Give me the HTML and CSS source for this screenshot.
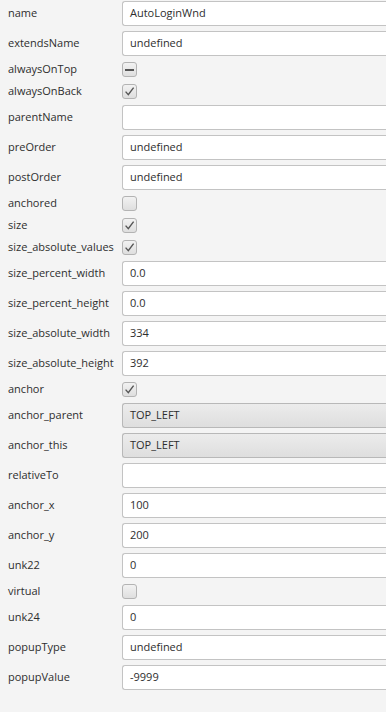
FILE: index.html
```html
<!DOCTYPE html>
<html>
<head>
<meta charset="utf-8">
<link rel="stylesheet" href="styles.css">
</head>
<body>
<div class="grid">
  <div class="label">name</div><div class="field">AutoLoginWnd</div>
  <div class="label">extendsName</div><div class="field">undefined</div>
  <div class="label">alwaysOnTop</div><div class="cbcell"><span class="cb"><span class="dash"></span></span></div>
  <div class="label">alwaysOnBack</div><div class="cbcell"><span class="cb"><svg width="15" height="15" viewBox="0 0 15 15"><path d="M3.6 7.6 L6.3 10.6 L11.6 3.6" fill="none" stroke="#555" stroke-width="1.4"/></svg></span></div>
  <div class="label">parentName</div><div class="field"></div>
  <div class="label">preOrder</div><div class="field">undefined</div>
  <div class="label">postOrder</div><div class="field">undefined</div>
  <div class="label">anchored</div><div class="cbcell"><span class="cb"></span></div>
  <div class="label">size</div><div class="cbcell"><span class="cb"><svg width="15" height="15" viewBox="0 0 15 15"><path d="M3.6 7.6 L6.3 10.6 L11.6 3.6" fill="none" stroke="#555" stroke-width="1.4"/></svg></span></div>
  <div class="label">size_absolute_values</div><div class="cbcell"><span class="cb"><svg width="15" height="15" viewBox="0 0 15 15"><path d="M3.6 7.6 L6.3 10.6 L11.6 3.6" fill="none" stroke="#555" stroke-width="1.4"/></svg></span></div>
  <div class="label">size_percent_width</div><div class="field">0.0</div>
  <div class="label">size_percent_height</div><div class="field">0.0</div>
  <div class="label">size_absolute_width</div><div class="field">334</div>
  <div class="label">size_absolute_height</div><div class="field">392</div>
  <div class="label">anchor</div><div class="cbcell"><span class="cb"><svg width="15" height="15" viewBox="0 0 15 15"><path d="M3.6 7.6 L6.3 10.6 L11.6 3.6" fill="none" stroke="#555" stroke-width="1.4"/></svg></span></div>
  <div class="label">anchor_parent</div><div class="combo">TOP_LEFT</div>
  <div class="label">anchor_this</div><div class="combo">TOP_LEFT</div>
  <div class="label">relativeTo</div><div class="field"></div>
  <div class="label">anchor_x</div><div class="field">100</div>
  <div class="label">anchor_y</div><div class="field">200</div>
  <div class="label">unk22</div><div class="field">0</div>
  <div class="label">virtual</div><div class="cbcell"><span class="cb"></span></div>
  <div class="label">unk24</div><div class="field">0</div>
  <div class="label">popupType</div><div class="field">undefined</div>
  <div class="label">popupValue</div><div class="field">-9999</div>
</div>
</body>
</html>
```
FILE: styles.css
```css
html, body {
  margin: 0;
  padding: 0;
  background: #f4f4f4;
  overflow: hidden;
}
body {
  width: 386px;
  height: 712px;
  font-family: "Open Sans", "Noto Sans", sans-serif;
  font-size: 11px;
  color: #2e2e2e;
}
.grid {
  display: grid;
  grid-template-columns: 114px 1fr;
  row-gap: 5px;
  padding: 1px 0 0 8px;
  align-items: center;
}
.label {
  white-space: nowrap;
  line-height: 15px;
  padding-bottom: 2px;
  color: #2e2e2e;
}
.field, .combo {
  box-sizing: border-box;
  height: 25px;
  line-height: 22px;
  padding-left: 7px;
  padding-bottom: 1px;
  border: 1px solid #c3c3c3;
  border-right: none;
  border-radius: 3px 0 0 3px;
  background: #fff;
  white-space: nowrap;
  color: #2e2e2e;
}
.combo {
  border-color: #b8b8b8;
  background: linear-gradient(#ececec, #dedede);
}
.cbcell {
  height: 17px;
  display: flex;
  align-items: center;
}
.cb {
  box-sizing: border-box;
  width: 15px;
  height: 15px;
  border: 1px solid #b3b3b3;
  border-radius: 3px;
  background: linear-gradient(#f2f2f2, #dedede);
  display: flex;
  align-items: center;
  justify-content: center;
  position: relative;
}
.cb svg {
  position: absolute;
  left: -1px;
  top: -1px;
}
.dash {
  width: 9px;
  height: 2px;
  background: #555;
}
```
